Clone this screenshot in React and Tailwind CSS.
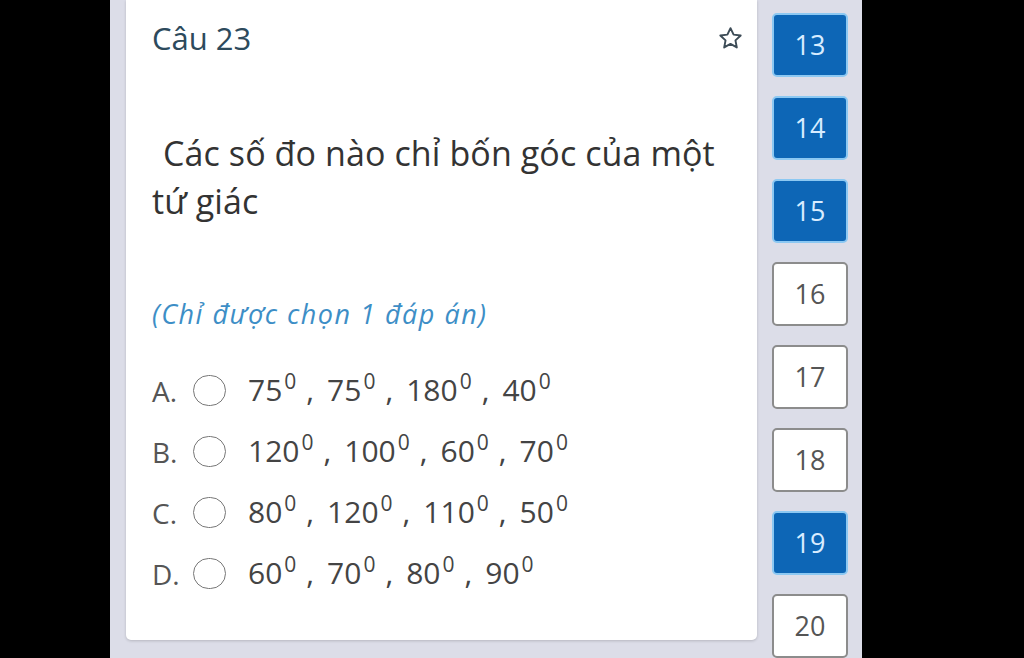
import React from "react";

const font = { fontFamily: '"Open Sans", "Noto Sans", sans-serif' };

function Deg({ values }) {
  return (
    <span className="text-[30px] leading-none text-[#444]">
      {values.map((v, i) => (
        <React.Fragment key={i}>
          {i > 0 && <span className="ml-[10px] mr-[13px]">,</span>}
          <span>{v}</span>
          <span className="relative top-[-12px] ml-[2px] text-[21px]">0</span>
        </React.Fragment>
      ))}
    </span>
  );
}

function Option({ letter, values }) {
  return (
    <div className="flex h-[61px] items-center">
      <span className="w-[40px] text-[28px] text-[#555]">{letter}.</span>
      <span className="ml-[1px] box-border h-[31px] w-[33px] rounded-full border-[1.5px] border-[#777]" />
      <span className="ml-[22px]">
        <Deg values={values} />
      </span>
    </div>
  );
}

function NumBtn({ n, active }) {
  return (
    <div
      className={
        active
          ? "flex h-[65px] w-[76px] items-center justify-center rounded-[5px] border-2 border-[#8cc8f2] bg-[#0d66b6] text-[27px] text-[#d8ecff]"
          : "flex h-[65px] w-[76px] items-center justify-center rounded-[5px] border-2 border-[#8c8c8c] bg-white text-[27px] text-[#555]"
      }
    >
      {n}
    </div>
  );
}

export default function App() {
  const nums = [
    [13, true],
    [14, true],
    [15, true],
    [16, false],
    [17, false],
    [18, false],
    [19, true],
    [20, false],
  ];
  return (
    <div className="flex h-[658px] w-[1024px] overflow-hidden bg-black" style={font}>
      <div className="w-[110px] shrink-0 bg-black" />
      <div className="flex h-full w-[752px] shrink-0 bg-[#dcdde8]">
        <div className="ml-[16px] flex h-[640px] w-[631px] shrink-0 flex-col rounded-b-[5px] bg-white pl-[26px] pr-[14px] shadow-[0_1px_3px_rgba(0,0,0,0.18)]">
          <div className="flex items-center justify-between pt-[19px]">
            <span className="text-[31px] leading-[38px] text-[#2d4a5c]">Câu 23</span>
            <svg width="27" height="27" viewBox="0 0 24 24" className="mr-[-1px]" fill="none" stroke="#3d4c57" strokeWidth="1.7" strokeLinejoin="round">
              <path d="M12 2.8l2.75 5.8 6.3.75-4.65 4.35 1.2 6.25L12 16.85 6.4 19.95l1.2-6.25L2.95 9.35l6.3-.75z" />
            </svg>
          </div>
          <div className="mt-[72px] text-[34px] leading-[48px] tracking-[0.1px] text-[#333]">
            <span className="ml-[11px]">Các số đo nào chỉ bốn góc của một</span>
            <br />
            tứ giác
          </div>
          <div className="mt-[73px] text-[27px] leading-[32px] tracking-[1.5px] italic text-[#3d8ec6]">
            (Chỉ được chọn 1 đáp án)
          </div>
          <div className="mt-[30px] flex flex-col">
            <Option letter="A" values={["75", "75", "180", "40"]} />
            <Option letter="B" values={["120", "100", "60", "70"]} />
            <Option letter="C" values={["80", "120", "110", "50"]} />
            <Option letter="D" values={["60", "70", "80", "90"]} />
          </div>
        </div>
        <div className="ml-[15px] flex flex-col gap-[18.8px] pt-[13px]">
          {nums.map(([n, a]) => (
            <NumBtn key={n} n={n} active={a} />
          ))}
        </div>
      </div>
      <div className="flex-1 bg-black" />
    </div>
  );
}
